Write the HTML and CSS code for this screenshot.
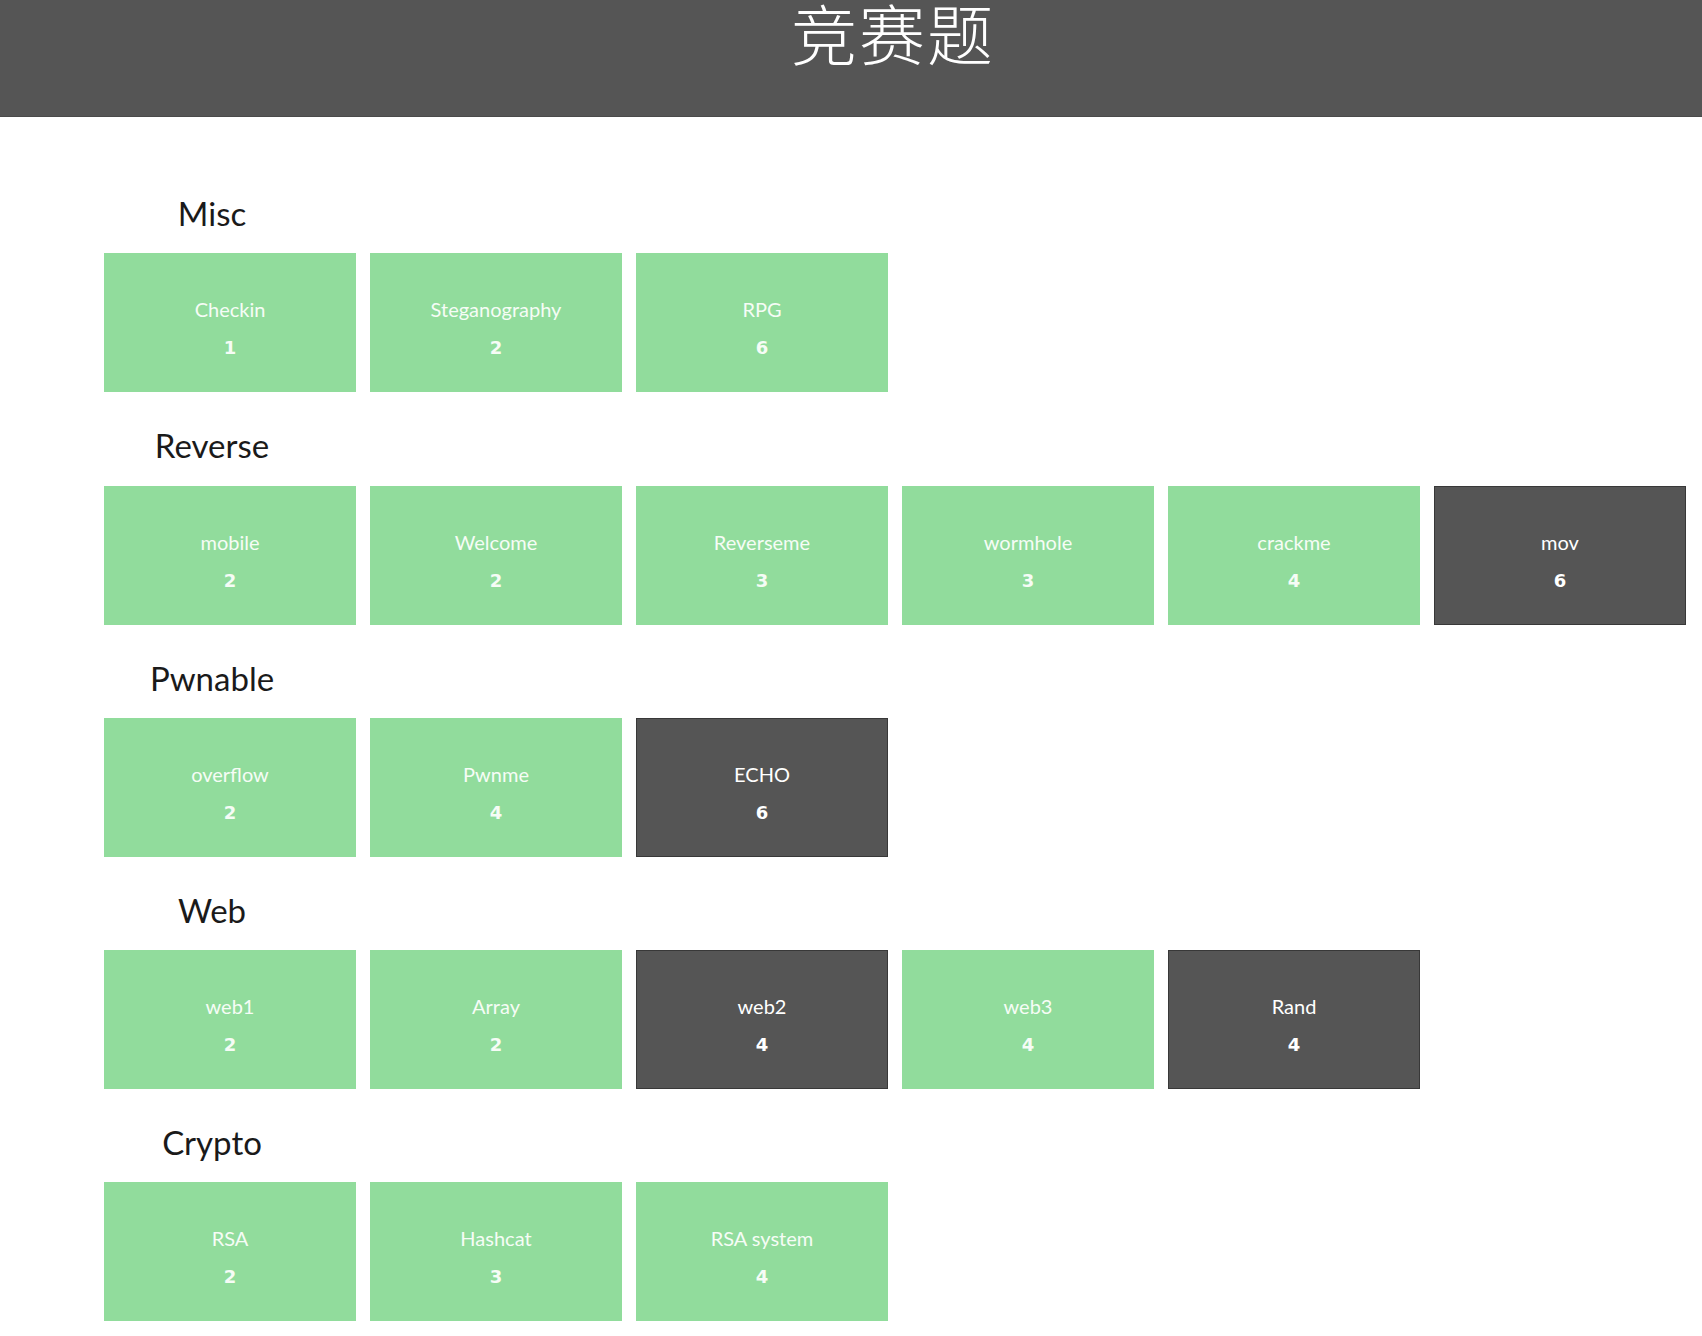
FILE: index.html
```html
<!DOCTYPE html>
<html lang="zh">
<head>
<meta charset="utf-8">
<title>竞赛题</title>
<link rel="stylesheet" href="styles.css">
</head>
<body>
<header class="topbar">
  <h1 class="title">竞赛题</h1>
</header>
<main class="board">
  <section class="category">
    <h2 class="cat-name">Misc</h2>
    <div class="cards">
      <a class="card solved"><span class="name">Checkin</span><span class="pts">1</span></a>
      <a class="card solved"><span class="name">Steganography</span><span class="pts">2</span></a>
      <a class="card solved"><span class="name">RPG</span><span class="pts">6</span></a>
    </div>
  </section>
  <section class="category">
    <h2 class="cat-name">Reverse</h2>
    <div class="cards">
      <a class="card solved"><span class="name">mobile</span><span class="pts">2</span></a>
      <a class="card solved"><span class="name">Welcome</span><span class="pts">2</span></a>
      <a class="card solved"><span class="name">Reverseme</span><span class="pts">3</span></a>
      <a class="card solved"><span class="name">wormhole</span><span class="pts">3</span></a>
      <a class="card solved"><span class="name">crackme</span><span class="pts">4</span></a>
      <a class="card open"><span class="name">mov</span><span class="pts">6</span></a>
    </div>
  </section>
  <section class="category">
    <h2 class="cat-name">Pwnable</h2>
    <div class="cards">
      <a class="card solved"><span class="name">overflow</span><span class="pts">2</span></a>
      <a class="card solved"><span class="name">Pwnme</span><span class="pts">4</span></a>
      <a class="card open"><span class="name">ECHO</span><span class="pts">6</span></a>
    </div>
  </section>
  <section class="category">
    <h2 class="cat-name">Web</h2>
    <div class="cards">
      <a class="card solved"><span class="name">web1</span><span class="pts">2</span></a>
      <a class="card solved"><span class="name">Array</span><span class="pts">2</span></a>
      <a class="card open"><span class="name">web2</span><span class="pts">4</span></a>
      <a class="card solved"><span class="name">web3</span><span class="pts">4</span></a>
      <a class="card open"><span class="name">Rand</span><span class="pts">4</span></a>
    </div>
  </section>
  <section class="category">
    <h2 class="cat-name">Crypto</h2>
    <div class="cards">
      <a class="card solved"><span class="name">RSA</span><span class="pts">2</span></a>
      <a class="card solved"><span class="name">Hashcat</span><span class="pts">3</span></a>
      <a class="card solved"><span class="name">RSA system</span><span class="pts">4</span></a>
    </div>
  </section>
</main>
</body>
</html>
```
FILE: styles.css
```css
html, body {
  margin: 0;
  padding: 0;
  background: #ffffff;
}
body {
  font-family: Lato, "Noto Sans", "Liberation Sans", sans-serif;
  color: #1a1a1a;
}
.topbar {
  height: 117px;
  box-sizing: border-box;
  background: #555555;
  border-bottom: 1px solid #4a4a4a;
  padding-top: 2px;
}
.title {
  margin: 0;
  padding-left: 84px;
  text-align: center;
  font-family: "Noto Sans CJK SC", sans-serif;
  font-weight: 300;
  font-size: 66px;
  line-height: 58px;
  color: #ffffff;
  letter-spacing: 2px;
}
.board {
  padding: 43px 0 0 104px;
}
.cat-name {
  margin: 0;
  width: 216px;
  height: 93.3px;
  box-sizing: border-box;
  padding-top: 33px;
  text-align: center;
  font-size: 33px;
  font-weight: 400;
  line-height: 40px;
  color: #1a1a1a;
}
.cards {
  display: flex;
  gap: 14px;
}
.card {
  width: 252px;
  height: 139px;
  box-sizing: border-box;
  padding-top: 44px;
  display: flex;
  flex-direction: column;
  align-items: center;
  color: #f6fcf6;
  text-decoration: none;
  font-size: 20px;
}
.card.solved {
  background: #91dc9c;
}
.card.open {
  background: #555555;
  border: 1px solid #383838;
  padding-top: 43px;
  color: #ffffff;
}
.name {
  line-height: 24px;
}
.pts {
  margin-top: 16px;
  line-height: 22px;
  font-family: "DejaVu Sans", Verdana, sans-serif;
  font-size: 18px;
  font-weight: 700;
}
```
